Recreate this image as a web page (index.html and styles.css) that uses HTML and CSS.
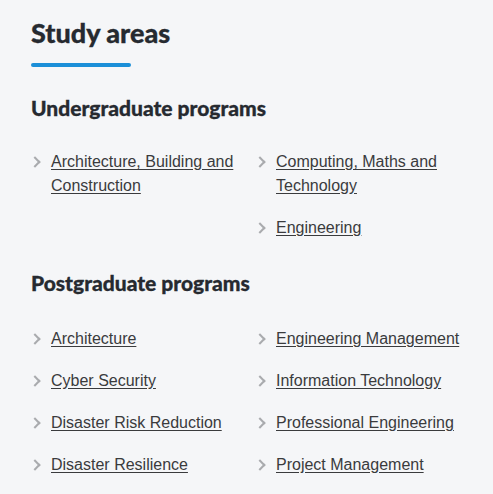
FILE: index.html
```html
<!DOCTYPE html>
<html lang="en">
<head>
<meta charset="utf-8">
<title>Study areas</title>
<link rel="stylesheet" href="styles.css">
</head>
<body>
<section class="study">
  <h1 class="title">Study areas</h1>
  <div class="bar"></div>

  <h2 class="subtitle">Undergraduate programs</h2>
  <div class="cols">
    <ul class="list">
      <li><a href="#">Architecture, Building and Construction</a></li>
    </ul>
    <ul class="list">
      <li><a href="#">Computing, Maths and Technology</a></li>
      <li><a href="#">Engineering</a></li>
    </ul>
  </div>

  <h2 class="subtitle">Postgraduate programs</h2>
  <div class="cols cols-post">
    <ul class="list">
      <li><a href="#">Architecture</a></li>
      <li><a href="#">Cyber Security</a></li>
      <li><a href="#">Disaster Risk Reduction</a></li>
      <li><a href="#">Disaster Resilience</a></li>
    </ul>
    <ul class="list">
      <li><a href="#">Engineering Management</a></li>
      <li><a href="#">Information Technology</a></li>
      <li><a href="#">Professional Engineering</a></li>
      <li><a href="#">Project Management</a></li>
    </ul>
  </div>
</section>
</body>
</html>
```

FILE: styles.css
```css
html, body {
  margin: 0;
  padding: 0;
  background: #f5f6f8;
}

.study {
  padding: 16px 12px 0 31px;
  font-family: "Liberation Sans", Arial, sans-serif;
  color: #333;
}

.title {
  margin: 0;
  font-family: Lato, "Noto Sans", sans-serif;
  font-weight: 900;
  font-size: 27px;
  line-height: 34px;
  color: #262a30;
  -webkit-text-stroke: 0.3px #262a30;
}

.bar {
  width: 100px;
  height: 4px;
  border-radius: 2px;
  background: #1b8fd8;
  margin-top: 13px;
}

.subtitle {
  margin: 29px 0 0;
  font-family: Lato, "Noto Sans", sans-serif;
  font-weight: 900;
  font-size: 21px;
  line-height: 24px;
  color: #262a30;
  -webkit-text-stroke: 0.3px #262a30;
}

.cols {
  display: grid;
  grid-template-columns: 225px 225px;
  margin-top: 30px;
}

.cols-post {
  margin-top: 32px;
}

.list {
  list-style: none;
  margin: 0;
  padding: 0;
}

.list li {
  position: relative;
  padding-left: 20px;
  padding-bottom: 18px;
  font-size: 16px;
  line-height: 24px;
}

.list li::before {
  content: "";
  position: absolute;
  left: 0;
  top: 8px;
  width: 6px;
  height: 6px;
  border-top: 2px solid #a9abae;
  border-right: 2px solid #a9abae;
  transform: rotate(45deg);
}

.list a {
  color: #3a3b3d;
  text-decoration: underline;
  text-underline-offset: 2px;
}

.cols + .subtitle {
  margin-top: 13px;
}
```
